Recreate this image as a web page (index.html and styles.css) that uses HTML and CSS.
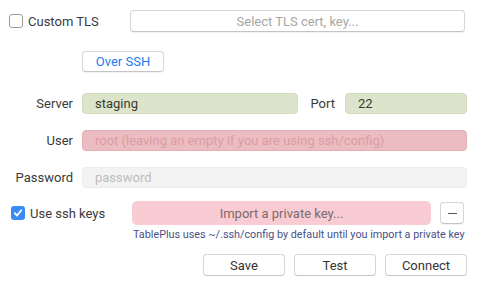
FILE: index.html
```html
<!DOCTYPE html>
<html lang="en">
<head>
    <meta charset="UTF-8">
    <title>Connection</title>
    <link rel="stylesheet" href="styles.css">
</head>
<body>
    <div class="panel">
        <div class="tls-row">
            <label class="check-label">
                <span class="box"></span>
                Custom TLS
            </label>
            <button class="btn tls-btn">Select TLS cert, key...</button>
        </div>

        <div class="ssh-row">
            <button class="btn over-ssh">Over SSH</button>
        </div>

        <div class="fields">
            <span class="field-label">Server</span>
            <div class="server-line">
                <div class="input green">staging</div>
                <span class="port-label">Port</span>
                <div class="input green port">22</div>
            </div>

            <span class="field-label">User</span>
            <div class="input red placeholder">root (leaving an empty if you are using ssh/config)</div>

            <span class="field-label">Password</span>
            <div class="input grey placeholder">password</div>
        </div>

        <div class="keys-row">
            <label class="check-label keys-label">
                <span class="box checked">
                    <svg width="10" height="10" viewBox="0 0 10 10"><path d="M1.8 5.2 L4 7.6 L8.3 2.3" fill="none" stroke="#fff" stroke-width="1.8" stroke-linecap="round" stroke-linejoin="round"/></svg>
                </span>
                Use ssh keys
            </label>
            <div class="keys-col">
                <div class="keys-line">
                    <button class="import-btn">Import a private key...</button>
                    <button class="btn minus-btn"><span class="minus"></span></button>
                </div>
                <p class="hint">TablePlus uses ~/.ssh/config by default until you import a private key</p>
            </div>
        </div>

        <div class="actions">
            <button class="btn action">Save</button>
            <button class="btn action">Test</button>
            <button class="btn action">Connect</button>
        </div>
    </div>
</body>
</html>
```

FILE: styles.css
```css
body {
    margin: 0;
    background: #ffffff;
    font-family: Roboto, 'Liberation Sans', sans-serif;
    font-size: 13px;
    color: #3a3a3a;
}

.panel {
    width: 467px;
    padding-top: 10px;
}

.btn {
    background: #ffffff;
    border: 1px solid #d6d6d6;
    border-bottom-color: #c4c4c4;
    border-radius: 4px;
    box-shadow: 0 1px 1px rgba(0, 0, 0, 0.06);
    font-family: inherit;
    font-size: 13px;
    color: #333333;
    padding: 0;
    box-sizing: border-box;
}

.check-label {
    display: flex;
    align-items: center;
    gap: 5px;
}

.box {
    width: 12px;
    height: 12px;
    border: 1px solid #9a9a9a;
    border-radius: 3px;
    background: #fff;
    display: flex;
    align-items: center;
    justify-content: center;
}

.box.checked {
    width: 14px;
    height: 14px;
    border: none;
    background: #3b8bf4;
}

.tls-row {
    display: flex;
    align-items: center;
    height: 22px;
    padding-left: 9px;
}

.tls-row .check-label {
    width: 121px;
}

.tls-btn {
    width: 335px;
    height: 22px;
    color: #a6a6a6;
}

.ssh-row {
    margin-top: 19px;
    padding-left: 82px;
}

.over-ssh {
    width: 82px;
    height: 21px;
    color: #1f7cf2;
}

.fields {
    display: grid;
    grid-template-columns: 73px 1fr;
    column-gap: 9px;
    row-gap: 16px;
    margin-top: 21px;
    align-items: center;
}

.field-label {
    text-align: right;
}

.server-line {
    display: flex;
    align-items: center;
}

.server-line .input {
    flex: 1;
}

.server-line .port {
    flex: none;
    width: 122px;
}

.port-label {
    margin: 0 10px 0 12px;
}

.input {
    height: 21px;
    box-sizing: border-box;
    border-radius: 4px;
    padding: 0 12px;
    line-height: 20px;
    white-space: nowrap;
    overflow: hidden;
}

.green {
    background: #dce5cb;
    border: 1px solid #d1dcbe;
    color: #3b3b32;
}

.red {
    background: #ebbcc1;
    border: 1px solid #e3aeb4;
}

.red.placeholder {
    color: #dc9ca3;
}

.grey {
    background: #f3f3f3;
    border: 1px solid #ececec;
}

.grey.placeholder {
    color: #bdbdbd;
}

.keys-row {
    display: flex;
    margin-top: 13px;
    padding-left: 11px;
}

.keys-label {
    width: 121px;
    height: 24px;
    align-self: flex-start;
}

.keys-line {
    display: flex;
    align-items: center;
    gap: 9px;
}

.import-btn {
    width: 299px;
    height: 24px;
    border: none;
    border-radius: 5px;
    background: #f8ccd2;
    color: #7d6a6d;
    font-family: inherit;
    font-size: 13px;
}

.minus-btn {
    width: 24px;
    height: 22px;
    display: flex;
    align-items: center;
    justify-content: center;
}

.minus {
    width: 9px;
    height: 1px;
    background: #555;
}

.hint {
    margin: 3px 0 0 1px;
    font-size: 10.8px;
    color: #4a4f86;
}

.actions {
    display: flex;
    justify-content: flex-end;
    gap: 9px;
    margin-top: 13px;
}

.action {
    width: 82px;
    height: 22px;
}
```
